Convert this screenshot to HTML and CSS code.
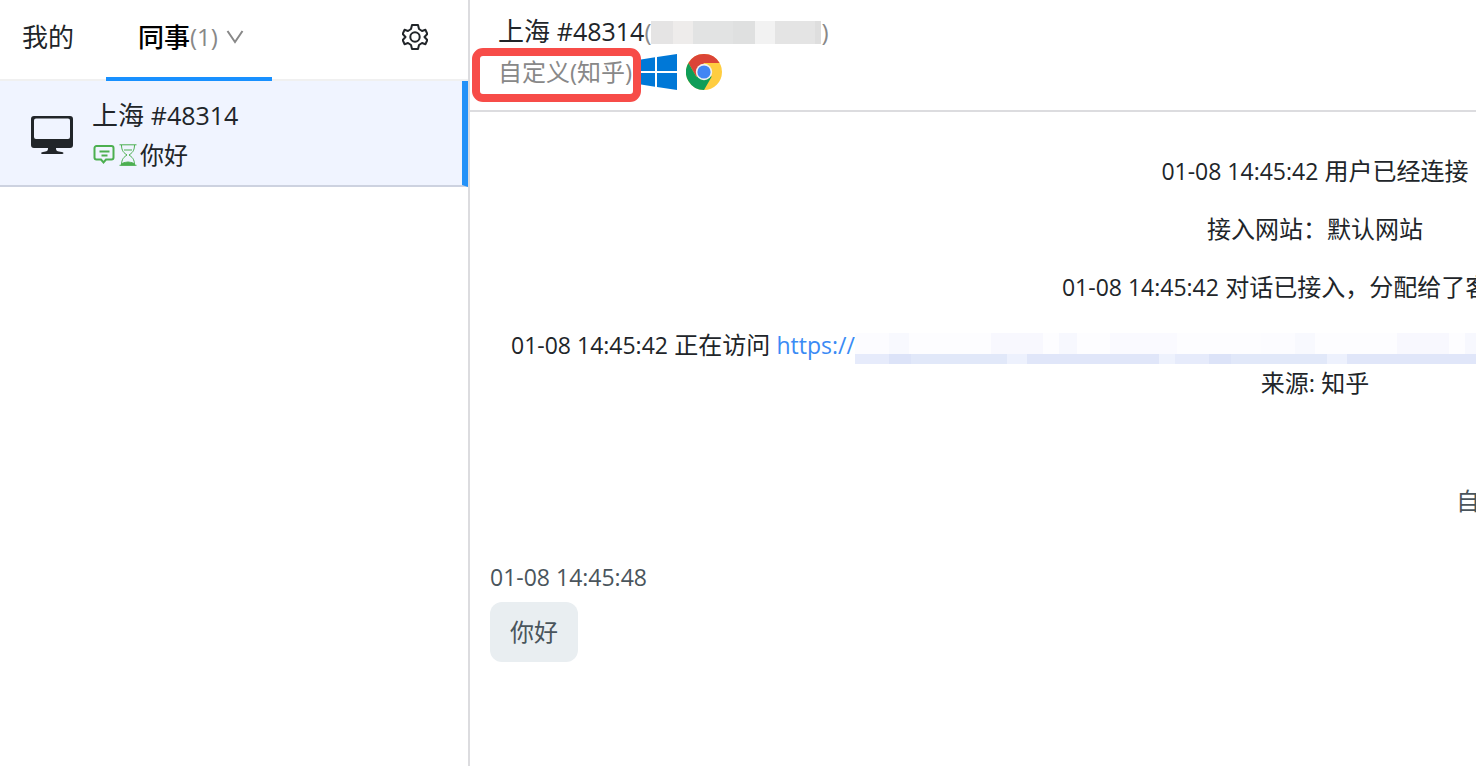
FILE: index.html
```html
<!DOCTYPE html>
<html lang="zh-CN">
<head>
    <meta charset="UTF-8">
    <meta name="viewport" content="width=device-width, initial-scale=1.0">
    <title>在线客服</title>
    <link rel="stylesheet" href="styles.css">
</head>
<body>
    <div class="app">
        <aside class="sidebar">
            <nav class="tabs">
                <button type="button" class="tab">我的</button>
                <button type="button" class="tab active">同事<span class="count">(1)</span>
                    <svg class="chevron" viewBox="0 0 18 14" aria-hidden="true"><path d="M1.500 1l7.500 11 7.500-11"/></svg>
                </button>
                <button type="button" class="settings" aria-label="设置">
                    <svg viewBox="0 0 26 28" aria-hidden="true">
                        <path d="M10 2h6l1 4 3 2 3.500-1.200 1.800 4.200-2.800 3 2.800 3-1.800 4.200L20 20l-3 2-1 4h-6l-1-4-3-2-3.500 1.200L.7 17l2.800-3L.7 11l1.800-4.200L6 8l3-2z"/>
                        <circle cx="13" cy="14" r="4.700"/>
                    </svg>
                </button>
            </nav>

            <a href="#" class="visitor">
                <svg class="monitor" viewBox="0 0 42 38" aria-hidden="true">
                    <path fill-rule="evenodd" d="M3 0h36a3 3 0 0 1 3 3v26a3 3 0 0 1-3 3H25c0 3 1 3.500 6 4 2 .3 2 2 0 2H12c-2.500 0-2.500-1.700 0-2 4-.5 5-1 5-4H3a3 3 0 0 1-3-3V3a3 3 0 0 1 3-3zM5 2.500a2 2 0 0 0-2 2V21a2 2 0 0 0 2 2h32a2 2 0 0 0 2-2V4.500a2 2 0 0 0-2-2z"/>
                </svg>
                <div class="visitor-info">
                    <div class="name">上海 <span class="num">#48314</span></div>
                    <div class="last-message">
                        <svg class="comment" viewBox="0 0 24 24" aria-hidden="true">
                            <path d="M4.500 3h15a2 2 0 0 1 2 2v9.500a2 2 0 0 1-2 2h-5.500l-2.500 3-2.500-3H4.500a2 2 0 0 1-2-2V5a2 2 0 0 1 2-2zM7.500 8.500h10M9.500 12.500h6"/>
                        </svg>
                        <svg class="hourglass" viewBox="0 0 24 24" aria-hidden="true">
                            <path d="M3.500 1.800h17M3.500 22.300h17M5.500 2c0 6 2.500 8 5.500 10-3 2-5.500 4-5.500 10M18.500 2c0 6-2.500 8-5.500 10 3 2 5.500 4 5.500 10M8 7h8"/>
                            <path class="sand" d="M5 22c.5-2 3-2.500 7-3 4 .5 6.500 1 7 3z"/>
                        </svg>
                        <span>你好</span>
                    </div>
                </div>
            </a>
        </aside>

        <main class="chat">
            <header class="chat-header">
                <div class="name">上海 <span class="num">#48314</span><span class="paren">(</span><span class="masked-ip"></span><span class="paren">)</span></div>
                <div class="origin">
                    <span class="source">自定义(知乎)</span>
                    <svg class="system" viewBox="0 0 36 36" aria-hidden="true">
                        <path d="M0 5.500L14 3.200V17H0zM16 3L36 0v17H16zM0 19h14v13.800L0 30.500zM16 19h20v17l-20-3z"/>
                    </svg>
                    <svg class="browser" viewBox="0 0 36 36" aria-hidden="true">
                        <circle cx="18" cy="18" r="18" fill="#ffcd40"/>
                        <path fill="#db4437" d="M2.410 9A18 18 0 0 1 33.590 9H18L10.200 22.500z"/>
                        <path fill="#0f9d58" d="M2.410 9A18 18 0 0 0 18 36l7.800-13.500L10.200 22.500z"/>
                        <circle cx="18" cy="18" r="8.200" fill="#f1f1f1"/>
                        <circle cx="18" cy="18" r="6.600" fill="#4285f4"/>
                    </svg>
                </div>
            </header>

            <section class="log">
                <div class="messages">
                    <p class="notice"><time>01-08 14:45:42</time> 用户已经连接</p>
                    <p class="notice">接入网站：默认网站</p>
                    <p class="notice"><time>01-08 14:45:42</time> 对话已接入，分配给了客服1001</p>
                    <div class="notice">
                        <div class="visit"><span><time>01-08 14:45:42</time> 正在访问 <a href="#">https://</a></span><span class="masked-url"></span></div>
                        <div>来源: 知乎</div>
                    </div>
                    <p class="auto-reply">自动回复</p>
                    <div class="message">
                        <time>01-08 14:45:48</time>
                        <div class="bubble">你好</div>
                    </div>
                </div>
            </section>
        </main>
    </div>
</body>
</html>
```

FILE: styles.css
```css
/* Base styles */
* {
    box-sizing: border-box;
}

body {
    margin: 0;
    font-family: "Open Sans", "Noto Sans CJK SC", sans-serif;
    font-size: 24px;
    line-height: 38px;
    color: #212529;
    background: #fff;
}

p {
    margin: 0;
}

a {
    color: #3a8bf5;
    text-decoration: none;
}

button {
    border: none;
    background: none;
    font: inherit;
    color: inherit;
    cursor: pointer;
}

svg {
    display: block;
    flex: none;
}

time,
.visit a {
    font-size: 23px;
}

.app {
    display: flex;
    height: 100vh;
    overflow: hidden;
}

/* Sidebar */
.sidebar {
    flex: none;
    width: 470px;
    border-right: 2px solid #dcdcdf;
}

.tabs {
    display: flex;
    box-shadow: inset 0 -2px #f0f0f0;
}

.tab {
    display: flex;
    align-items: center;
    padding: 18px 32px 25px 22px;
    font-size: 26px;
}

.tab.active {
    padding: 18px 28px 21px 32px;
    border-bottom: 4px solid #1890ff;
    color: #000;
    font-weight: 500;
}

.count {
    color: #888;
    font-size: 24px;
    font-weight: 400;
}

.chevron {
    width: 18px;
    height: 14px;
    margin-left: 8px;
    fill: none;
    stroke: #888;
    stroke-width: 2;
}

.settings {
    margin-left: auto;
    padding: 0 40px 7px;
}

.settings svg {
    width: 26px;
    height: 28px;
    fill: none;
    stroke: #212529;
    stroke-width: 2;
    stroke-linejoin: round;
}

.visitor {
    display: flex;
    align-items: center;
    gap: 19px;
    padding: 14px 24px 10px 31px;
    border-right: 6px solid #2492f8;
    border-bottom: 2px solid #cdd2e0;
    background: #f0f4ff;
    color: #212529;
}

.monitor {
    width: 42px;
    height: 38px;
    fill: #212529;
}

.name {
    font-size: 26px;
    line-height: 40px;
}

.num {
    font-size: 25px;
}

.last-message {
    display: flex;
    align-items: center;
    line-height: 40px;
}

.last-message svg {
    width: 24px;
    height: 24px;
    fill: none;
    stroke: #4caf50;
    stroke-width: 2;
}

.last-message .hourglass {
    stroke-width: 1;
}

.hourglass .sand {
    fill: #4caf50;
}

/* Chat header */
.chat {
    display: flex;
    flex: 1;
    flex-direction: column;
    min-width: 0;
}

.chat-header {
    padding: 11px 28px 18px;
    border-bottom: 2px solid #dcdcdf;
}

.paren {
    color: #888;
    font-size: 24px;
}

.masked-ip {
    display: inline-block;
    width: 170px;
    height: 23px;
    vertical-align: -3px;
    background: linear-gradient(90deg, #e5e4e4 0 22px, #eeeceb 22px 42px, #e2e3e3 42px 82px, #dfe0e0 82px 104px, #f2f2f2 104px 124px, #e4e4e4 124px 164px, #dedede 164px);
}

.origin {
    display: flex;
    align-items: center;
    gap: 9px;
    line-height: 40px;
}

.source {
    position: relative;
    color: #888;
}

/* Red highlight frame around the source */
.source::after {
    content: "";
    position: absolute;
    inset: -4px -9px -10px -26px;
    border: 8px solid #f74c48;
    border-radius: 11px;
}

.system,
.browser {
    width: 36px;
    height: 36px;
}

.system {
    fill: #0078d7;
}

.log {
    flex: 1;
    padding: 40px 20px;
    overflow: hidden;
}

.messages {
    display: flex;
    flex-direction: column;
    gap: 20px;
    width: 1650px;
}

.notice {
    text-align: center;
}

.visit {
    display: flex;
    align-items: center;
    padding: 0 21px;
    white-space: nowrap;
}

.masked-url {
    flex: 1;
    height: 31px;
    margin-top: 6px;
    background:
        repeating-linear-gradient(90deg, #e6ebfb 0 34px, #dce3f8 34px 56px, #e1e8f9 56px 152px, #edf1fd 152px 172px, #e0e6f9 172px 304px, #eef2fd 304px 320px) bottom / 100% 10px no-repeat,
        repeating-linear-gradient(90deg, #fcfcff 0 34px, #f8f9fe 34px 54px, #fdfdff 54px 136px, #f8f8fe 136px 188px, #fdfdff 188px 204px, #f7f8fe 204px 222px, #fdfdff 222px 255px, #fafaff 255px 322px, #fdfdff 322px 406px);
}

.auto-reply {
    align-self: flex-end;
    width: 684px;
    margin: 60px 0 18px;
    color: #4a555c;
}

.message {
    color: #4a555c;
}

.message time {
    display: block;
}

.bubble {
    width: fit-content;
    margin-top: 6px;
    padding: 11px 20px;
    border-radius: 12px;
    background: #e9eef1;
}
```
